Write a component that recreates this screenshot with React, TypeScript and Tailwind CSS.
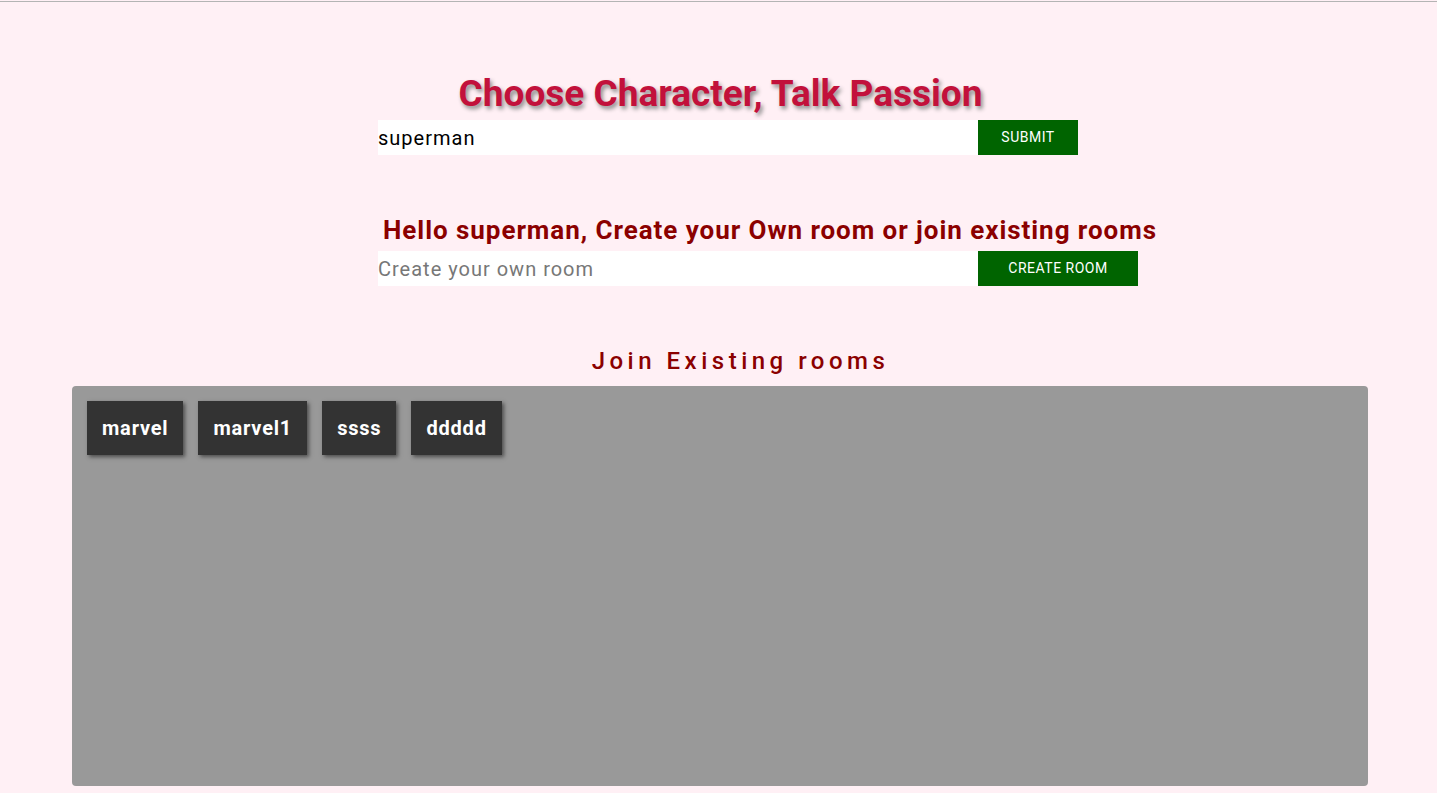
const rooms = ["marvel", "marvel1", "ssss", "ddddd"];

export default function App() {
  return (
    <main
      className="min-h-screen bg-[#fff0f5] text-black"
      style={{ fontFamily: "Roboto, 'Liberation Sans', sans-serif" }}
    >
      <div className="h-px" />
      <div className="h-px bg-[#b4b4b4]" />

      <h1 className="mt-[71px] pl-[4px] text-center text-[37px] leading-[42px] font-bold text-[#c2113b] [text-shadow:2px_3px_4px_#8a8a8a]">
        Choose Character, Talk Passion
      </h1>

      <div className="mt-[5px] flex pl-[378px]">
        <input
          className="h-[35px] w-[600px] bg-white text-[20px] tracking-[1px] text-black outline-none"
          defaultValue="superman"
        />
        <button className="h-[35px] w-[100px] bg-[#006400] text-[14px] font-normal tracking-[0.5px] text-white">
          SUBMIT
        </button>
      </div>

      <div className="pl-[383px] mt-[60px]">
        <h2 className="text-[26px] leading-[30px] font-bold tracking-[0.95px] text-[#8b0000]">
          Hello superman, Create your Own room or join existing rooms
        </h2>
      </div>

      <div className="mt-[6px] flex pl-[378px]">
        <input
          className="h-[35px] w-[600px] bg-white text-[20px] tracking-[1px] text-black outline-none placeholder:text-[#777]"
          placeholder="Create your own room"
        />
        <button className="h-[35px] w-[160px] bg-[#006400] text-[14px] font-normal tracking-[0.5px] text-white">
          CREATE ROOM
        </button>
      </div>

      <h3 className="mt-[61px] pl-[44px] text-center text-[24px] leading-[28px] font-medium tracking-[4.5px] text-[#8b0000]">
        Join Existing rooms
      </h3>

      <div className="mt-[11px] ml-[72px] mr-[69px] h-[400px] rounded bg-[#999999] p-[15px]">
        <div className="flex gap-[15px]">
          {rooms.map((r) => (
            <button
              key={r}
              className="h-[54px] bg-[#333333] px-[15px] text-[20px] font-bold tracking-[0.8px] text-white shadow-[2px_2px_4px_rgba(0,0,0,0.5)]"
            >
              {r}
            </button>
          ))}
        </div>
      </div>
    </main>
  );
}
